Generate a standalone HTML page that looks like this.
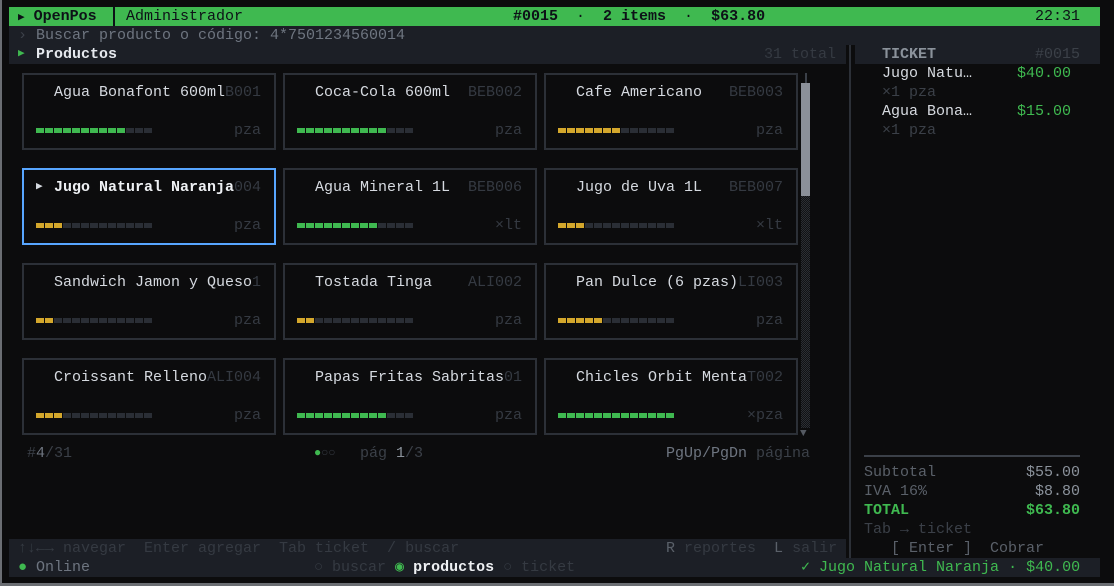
<!DOCTYPE html>
<html><head><meta charset="utf-8"><style>
*{margin:0;padding:0;box-sizing:border-box}
body{width:1114px;height:586px;background:#0c0c0d;position:relative;overflow:hidden;font-family:"Liberation Mono","DejaVu Sans Mono",monospace;font-size:15px;color:#d0d4da}
.t{position:absolute;white-space:pre;line-height:19px;height:19px}
.b{font-weight:bold}
.card{position:absolute;width:254px;height:77px;border:2px solid #2c3037}
.sel{border-color:#58a6ff}
.nm{position:absolute;white-space:pre;line-height:19px;background:#0c0c0d;color:#d6dae0}
.cd{position:absolute;white-space:pre;line-height:19px;color:#353a42}
.un{position:absolute;white-space:pre;line-height:19px;color:#353a42}
.bar{position:absolute;height:5px;width:117px;background:repeating-linear-gradient(90deg,#2a2e35 0 8px,transparent 8px 9px)}
.fill{height:5px}
.g{background:repeating-linear-gradient(90deg,#3fb950 0 8px,transparent 8px 9px)}
.y{background:repeating-linear-gradient(90deg,#d4a72c 0 8px,transparent 8px 9px)}
.tri{font-size:11px}
</style></head><body>
<div style="position:absolute;left:0;top:0;width:2px;height:586px;background:#6b6e73"></div>
<div style="position:absolute;left:0;top:583px;width:1114px;height:3px;background:#6b6e73"></div>

<div style="position:absolute;left:9px;top:7px;width:1091px;height:19px;background:#3fb950"></div>
<div class="t b" style="left:18px;top:7px;color:#0d1117"><span class="tri">▶</span> OpenPos</div>
<div style="position:absolute;left:113px;top:7px;width:2px;height:19px;background:#0d1117"></div>
<div class="t" style="left:126px;top:7px;color:#0d1117">Administrador</div>
<div class="t b" style="left:513px;top:7px;color:#0d1117">#0015 <span style="font-weight:normal"> · </span> 2 items <span style="font-weight:normal"> · </span> $63.80</div>
<div class="t" style="left:1035px;top:7px;color:#0d1117">22:31</div>

<div style="position:absolute;left:9px;top:26px;width:1091px;height:19px;background:#1c1f26"></div>
<div class="t" style="left:18px;top:26px;color:#3d424b">›</div>
<div class="t" style="left:36px;top:26px;color:#6e7580">Buscar producto o código: 4*7501234560014</div>

<div style="position:absolute;left:9px;top:45px;width:837px;height:19px;background:#1c1f26"></div>
<div style="position:absolute;left:855px;top:45px;width:245px;height:19px;background:#1c1f26"></div>
<div class="t tri" style="left:18px;top:45px;color:#3fb950">▶</div>
<div class="t b" style="left:36px;top:45px;color:#e6e9ee">Productos</div>
<div class="t" style="left:764px;top:45px;color:#353a42">31 total</div>
<div class="t b" style="left:882px;top:45px;color:#8b929b">TICKET</div>
<div class="t" style="left:1035px;top:45px;color:#3b4048">#0015</div>

<div style="position:absolute;left:849px;top:45px;width:2px;height:513px;background:#2c3037"></div>

<div class="t" style="left:882px;top:64px;color:#d6dae0">Jugo Natu…</div>
<div class="t" style="left:1017px;top:64px;color:#3fb950">$40.00</div>
<div class="t" style="left:882px;top:83px;color:#3b4048">×1 pza</div>
<div class="t" style="left:882px;top:102px;color:#d6dae0">Agua Bona…</div>
<div class="t" style="left:1017px;top:102px;color:#3fb950">$15.00</div>
<div class="t" style="left:882px;top:121px;color:#3b4048">×1 pza</div>

<div class="card" style="left:22px;top:73px"></div>
<div class="cd" style="left:207px;top:83px">BEB001</div><div class="nm" style="left:54px;top:83px">Agua Bonafont 600ml</div>
<div class="un" style="left:234px;top:121px">pza</div>
<div class="bar" style="left:36px;top:128px"><div class="fill g" style="width:90px"></div></div>

<div class="card" style="left:283px;top:73px"></div>
<div class="cd" style="left:468px;top:83px">BEB002</div><div class="nm" style="left:315px;top:83px">Coca-Cola 600ml</div>
<div class="un" style="left:495px;top:121px">pza</div>
<div class="bar" style="left:297px;top:128px"><div class="fill g" style="width:90px"></div></div>

<div class="card" style="left:544px;top:73px"></div>
<div class="cd" style="left:729px;top:83px">BEB003</div><div class="nm" style="left:576px;top:83px">Cafe Americano</div>
<div class="un" style="left:756px;top:121px">pza</div>
<div class="bar" style="left:558px;top:128px"><div class="fill y" style="width:63px"></div></div>

<div class="card sel" style="left:22px;top:168px"></div>
<div class="cd" style="left:207px;top:178px">BEB004</div><div class="t tri" style="left:36px;top:178px;color:#d6dae0">▶</div><div class="nm b" style="left:54px;top:178px;color:#eef0f3">Jugo Natural Naranja</div>
<div class="un" style="left:234px;top:216px">pza</div>
<div class="bar" style="left:36px;top:223px"><div class="fill y" style="width:27px"></div></div>

<div class="card" style="left:283px;top:168px"></div>
<div class="cd" style="left:468px;top:178px">BEB006</div><div class="nm" style="left:315px;top:178px">Agua Mineral 1L</div>
<div class="un" style="left:495px;top:216px">×lt</div>
<div class="bar" style="left:297px;top:223px"><div class="fill g" style="width:81px"></div></div>

<div class="card" style="left:544px;top:168px"></div>
<div class="cd" style="left:729px;top:178px">BEB007</div><div class="nm" style="left:576px;top:178px">Jugo de Uva 1L</div>
<div class="un" style="left:756px;top:216px">×lt</div>
<div class="bar" style="left:558px;top:223px"><div class="fill y" style="width:27px"></div></div>

<div class="card" style="left:22px;top:263px"></div>
<div class="cd" style="left:207px;top:273px">ALI001</div><div class="nm" style="left:54px;top:273px">Sandwich Jamon y Queso</div>
<div class="un" style="left:234px;top:311px">pza</div>
<div class="bar" style="left:36px;top:318px"><div class="fill y" style="width:18px"></div></div>

<div class="card" style="left:283px;top:263px"></div>
<div class="cd" style="left:468px;top:273px">ALI002</div><div class="nm" style="left:315px;top:273px">Tostada Tinga</div>
<div class="un" style="left:495px;top:311px">pza</div>
<div class="bar" style="left:297px;top:318px"><div class="fill y" style="width:18px"></div></div>

<div class="card" style="left:544px;top:263px"></div>
<div class="cd" style="left:729px;top:273px">ALI003</div><div class="nm" style="left:576px;top:273px">Pan Dulce (6 pzas)</div>
<div class="un" style="left:756px;top:311px">pza</div>
<div class="bar" style="left:558px;top:318px"><div class="fill y" style="width:45px"></div></div>

<div class="card" style="left:22px;top:358px"></div>
<div class="cd" style="left:207px;top:368px">ALI004</div><div class="nm" style="left:54px;top:368px">Croissant Relleno</div>
<div class="un" style="left:234px;top:406px">pza</div>
<div class="bar" style="left:36px;top:413px"><div class="fill y" style="width:27px"></div></div>

<div class="card" style="left:283px;top:358px"></div>
<div class="cd" style="left:468px;top:368px">SNK001</div><div class="nm" style="left:315px;top:368px">Papas Fritas Sabritas</div>
<div class="un" style="left:495px;top:406px">pza</div>
<div class="bar" style="left:297px;top:413px"><div class="fill g" style="width:90px"></div></div>

<div class="card" style="left:544px;top:358px"></div>
<div class="cd" style="left:729px;top:368px">SNT002</div><div class="nm" style="left:576px;top:368px">Chicles Orbit Menta</div>
<div class="un" style="left:747px;top:406px">×pza</div>
<div class="bar" style="left:558px;top:413px"><div class="fill g" style="width:117px"></div></div>

<div style="position:absolute;left:805px;top:73px;width:2px;height:10px;background:#3b4048"></div>
<div style="position:absolute;left:801px;top:83px;width:9px;height:113px;background:#8b9099"></div>
<div style="position:absolute;left:801px;top:196px;width:9px;height:232px;background:repeating-conic-gradient(#2b2e34 0 25%,#111214 0 50%) 0 0/2px 2px"></div>
<div class="t" style="left:800px;top:425px;color:#555a62;font-size:11px">▼</div>

<div class="t" style="left:27px;top:444px;color:#3b4048">#<span style="color:#6e7580">4</span>/31</div>
<div class="t" style="left:314px;top:444px;font-size:12px;color:#353a42"><span style="color:#3fb950">●</span>○○</div>
<div class="t" style="left:360px;top:444px;color:#3b4048">pág <span style="color:#8b929b">1</span>/3</div>
<div class="t" style="left:666px;top:444px;color:#6e7580">PgUp/PgDn <span style="color:#3b4048">página</span></div>

<div style="position:absolute;left:864px;top:455px;width:216px;height:2px;background:#3b4048"></div>
<div class="t" style="left:864px;top:463px;color:#5a6069">Subtotal</div>
<div class="t" style="left:1026px;top:463px;color:#8b929b">$55.00</div>
<div class="t" style="left:864px;top:482px;color:#5a6069">IVA 16%</div>
<div class="t" style="left:1035px;top:482px;color:#8b929b">$8.80</div>
<div class="t b" style="left:864px;top:501px;color:#3fb950">TOTAL</div>
<div class="t b" style="left:1026px;top:501px;color:#3fb950">$63.80</div>
<div class="t" style="left:864px;top:520px;color:#3b4048">Tab → ticket</div>
<div class="t" style="left:891px;top:539px;color:#5a6069">[ Enter ]  Cobrar</div>

<div style="position:absolute;left:9px;top:539px;width:837px;height:19px;background:#1c1f26"></div>
<div class="t" style="left:18px;top:539px;color:#353a42">↑↓←→ navegar  Enter agregar  Tab ticket  / buscar</div>
<div class="t" style="left:666px;top:539px;color:#353a42"><span style="color:#5a6069">R</span> reportes  <span style="color:#5a6069">L</span> salir</div>

<div style="position:absolute;left:9px;top:558px;width:1091px;height:19px;background:#1c1f26"></div>
<div class="t" style="left:18px;top:558px;color:#3fb950">●</div>
<div class="t" style="left:36px;top:558px;color:#6e7580">Online</div>
<div class="t" style="left:314px;top:558px;color:#353a42">○ buscar <span style="color:#3fb950">◉</span> <b style="color:#eef0f3">productos</b> ○ ticket</div>
<div class="t" style="left:801px;top:558px;color:#3fb950">✓ Jugo Natural Naranja · $40.00</div>
</body></html>
